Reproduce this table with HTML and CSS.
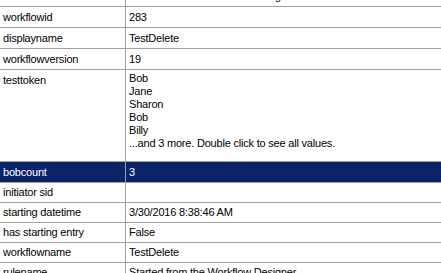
FILE: index.html
```html
<!DOCTYPE html>
<html>
<head>
<meta charset="utf-8">
<link rel="stylesheet" href="styles.css">
</head>
<body>
<div class="grid">
  <div class="row"><div class="name">rulename</div><div class="value">Started from the Workflow Designer</div></div>
  <div class="row"><div class="name">workflowid</div><div class="value">283</div></div>
  <div class="row"><div class="name">displayname</div><div class="value">TestDelete</div></div>
  <div class="row"><div class="name">workflowversion</div><div class="value">19</div></div>
  <div class="row tall"><div class="name">testtoken</div><div class="value">Bob<br>Jane<br>Sharon<br>Bob<br>Billy<br>...and 3 more. Double click to see all values.</div></div>
  <div class="row selected"><div class="name">bobcount</div><div class="value">3</div></div>
  <div class="row short"><div class="name">initiator sid</div><div class="value"></div></div>
  <div class="row short"><div class="name">starting datetime</div><div class="value">3/30/2016 8:38:46 AM</div></div>
  <div class="row short"><div class="name">has starting entry</div><div class="value">False</div></div>
  <div class="row short"><div class="name">workflowname</div><div class="value">TestDelete</div></div>
  <div class="row short"><div class="name">rulename</div><div class="value">Started from the Workflow Designer</div></div>
</div>
</body>
</html>
```
FILE: styles.css
```css
html, body {
  margin: 0;
  padding: 0;
  background: #ffffff;
  overflow: hidden;
}
.grid {
  margin-top: -14px;
  font-family: "Liberation Sans", Arial, sans-serif;
  font-size: 11px;
  line-height: 13px;
  letter-spacing: -0.2px;
  color: #000;
}
.row {
  display: grid;
  grid-template-columns: 126px 1fr;
  border-bottom: 1px solid #a0a0a0;
  height: 20px;
}
.name {
  padding: 4px 3px 0 3px;
  border-right: 1px solid #a0a0a0;
  white-space: nowrap;
}
.value {
  padding: 4px 3px 0 3px;
  white-space: nowrap;
}
.tall {
  height: 91px;
}
.tall .value {
  padding-top: 2px;
}
.selected {
  background: #0a246a;
  color: #ffffff;
}
.short {
  height: 19px;
}
.short .name,
.short .value {
  padding-top: 3px;
}
```
